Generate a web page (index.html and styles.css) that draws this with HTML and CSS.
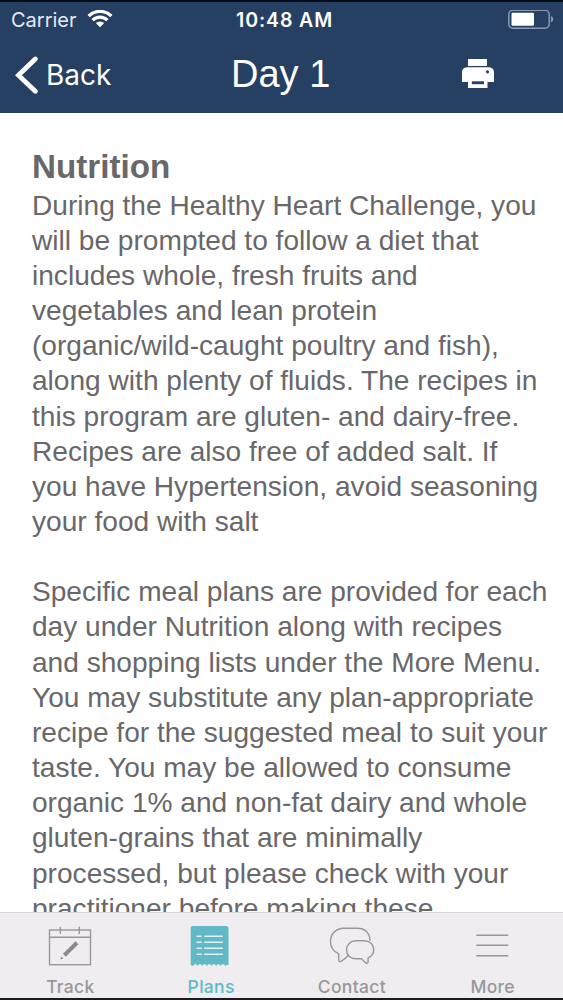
FILE: index.html
```html
<!DOCTYPE html>
<html lang="en">
<head>
    <meta charset="UTF-8">
    <meta name="viewport" content="width=device-width, initial-scale=1.0">
    <title>Day 1</title>
    <link rel="stylesheet" href="styles.css">
</head>
<body>
    <div class="app">
        <header class="header">
            <div class="status-bar">
                <div class="carrier">
                    <span>Carrier</span>
                    <svg class="wifi" width="26" height="19" viewBox="0 0 26 19" fill="none" stroke="#fff" stroke-width="3.2">
                        <path d="M1.6 6 A16.2 16.2 0 0 1 24.4 6"/>
                        <path d="M5.6 10.2 A10.4 10.4 0 0 1 20.4 10.2"/>
                        <path d="M13 17.3 L8.8 13.1 A6 6 0 0 1 17.2 13.1 Z" fill="#fff" stroke="none"/>
                    </svg>
                </div>
                <div class="time">10:48 AM</div>
                <svg class="battery" width="46" height="20" viewBox="0 0 46 20">
                    <rect x="0.8" y="0.3" width="40.4" height="18" rx="4.2" fill="none" stroke="#8799b3" stroke-width="1.5"/>
                    <rect x="3.5" y="2.8" width="22.5" height="13" rx="1.2" fill="#fff"/>
                    <path d="M43 6 Q45.3 6.7 45.3 9.3 Q45.3 11.9 43 12.6 Z" fill="#8799b3"/>
                </svg>
            </div>
            <nav class="nav-bar">
                <a class="back">
                    <svg width="24" height="38" viewBox="0 0 24 38" fill="none" stroke="#fff" stroke-width="4.8" stroke-linecap="round">
                        <path d="M20.3 3 L3.4 19.2 L20.3 35.3"/>
                    </svg>
                    <span>Back</span>
                </a>
                <h1 class="title">Day 1</h1>
                <a class="print">
                    <svg width="32" height="30" viewBox="0 0 32 30">
                        <path d="M6 0 H25 V7 H6 Z" fill="#fff"/>
                        <path d="M5 8.3 H27 Q32 8.5 32 13.5 V23 H25.5 V29 H6 V23 H0 V13.5 Q0 8.5 5 8.3 Z" fill="#fff"/>
                        <circle cx="25.5" cy="12.8" r="1.6" fill="#264063"/>
                        <path d="M9.8 22.3 H22 V25.2 H9.8 Z" fill="#264063"/>
                    </svg>
                </a>
            </nav>
        </header>

        <main class="content">
            <h2>Nutrition</h2>
            <p>During the Healthy Heart Challenge, you<br>
            will be prompted to follow a diet that<br>
            includes whole, fresh fruits and<br>
            vegetables and lean protein<br>
            (organic/wild-caught poultry and fish),<br>
            along with plenty of fluids. The recipes in<br>
            this program are gluten- and dairy-free.<br>
            Recipes are also free of added salt. If<br>
            you have Hypertension, avoid seasoning<br>
            your food with salt</p>
            <p>Specific meal plans are provided for each<br>
            day under Nutrition along with recipes<br>
            and shopping lists under the More Menu.<br>
            You may substitute any plan-appropriate<br>
            recipe for the suggested meal to suit your<br>
            taste. You may be allowed to consume<br>
            organic 1% and non-fat dairy and whole<br>
            gluten-grains that are minimally<br>
            processed, but please check with your<br>
            practitioner before making these</p>
        </main>

        <footer class="tab-bar">
            <a class="tab">
                <svg width="44" height="44" viewBox="0 0 44 44" fill="none" stroke="#99979a" stroke-width="1.4">
                    <rect x="1.5" y="6" width="41" height="34.7"/>
                    <path d="M1.5 13.3 H42.5 M12.3 2.7 V10 M31.3 2.7 V10"/>
                    <path d="M16.3 31.2 L29 18.8" stroke="#8c8a8d" stroke-width="4"/>
                    <path d="M12.3 35.5 L13.3 32.4 L15.5 34.6 Z" fill="#8c8a8d" stroke="none"/>
                </svg>
                <span>Track</span>
            </a>
            <a class="tab active">
                <svg width="44" height="44" viewBox="1.5 0 44 44">
                    <path d="M3.2 41 V4.6 Q3.2 2 5.8 2 H38.4 Q41 2 41 4.6 V41 H39 L37.8 42 L36.6 40.3 H34.4 L33.2 42 L32 40.3 H29.8 L28.6 42 L27.4 40.3 H25.2 L24 42 L22.8 40.3 H20.6 L19.4 42 L18.2 40.3 H16 L14.8 42 L13.6 40.3 H11.4 L10.2 42 L9 40.3 H6.8 L5.6 42 Z" fill="#61b9c8"/>
                    <path d="M9 12.3 H14.3 M9 18.3 H14.3 M9 24.3 H14.3 M9 30.3 H14.3 M16.7 12.3 H35.3 M16.7 18.3 H35.3 M16.7 24.3 H35.3 M16.7 30.3 H35.3" stroke="#e1f1f4" stroke-width="1.6"/>
                </svg>
                <span>Plans</span>
            </a>
            <a class="tab">
                <svg width="46" height="44" viewBox="0.5 0 46 44" fill="none" stroke="#99979a" stroke-width="1.4" stroke-linejoin="round">
                    <path d="M41.5 16.8 C41.5 8.5 36 4.3 29 4.3 H15.5 C7.5 4.3 2 10 2 17.5 C2 23.5 5 27.5 10.2 29.8 V36 Q10.4 38.4 12.5 37.3 Q16.5 35 20.2 31.3"/>
                    <path d="M27.5 16.8 H35.5 C41.5 16.8 45.2 20.5 45.2 25.6 C45.2 30 43.2 32.5 39.6 33.8 V38 Q39 40 37.2 38.8 Q34.6 36.5 33 34.8 H27.5 C21.8 34.8 18 31 18 25.8 C18 20.7 21.8 16.8 27.5 16.8 Z"/>
                </svg>
                <span>Contact</span>
            </a>
            <a class="tab">
                <svg width="44" height="44" viewBox="0.7 0 44 44" stroke="#99979a" stroke-width="1.5">
                    <path d="M6 11.3 H38 M6 21.3 H38 M6 31.7 H38"/>
                </svg>
                <span>More</span>
            </a>
        </footer>
    </div>
</body>
</html>
```
FILE: styles.css
```css
* {
    margin: 0;
    padding: 0;
    box-sizing: border-box;
}

body {
    background-color: #fff;
    font-family: "Liberation Sans", Arial, sans-serif;
}

svg {
    display: block;
    flex: none;
}

.app {
    display: flex;
    flex-direction: column;
    height: 1000px;
    overflow: hidden;
}

.header {
    flex: none;
    height: 113px;
    border-top: 2px solid #070d18;
    background-color: #264063;
    color: #fff;
}

.status-bar {
    display: grid;
    grid-template-columns: 225px 1fr 60px;
    align-items: center;
    height: 35px;
    padding: 0 9px 0 11px;
    font-family: Inter, sans-serif;
    font-size: 20px;
}

.carrier {
    display: flex;
    align-items: center;
    gap: 10px;
    color: #e4eaf3;
}

.time {
    font-weight: 600;
    font-size: 19.5px;
    letter-spacing: 0.9px;
}

.battery {
    justify-self: end;
}

.nav-bar {
    display: grid;
    grid-template-columns: 231px 1fr 101px;
    align-items: center;
    height: 75px;
}

.back {
    display: flex;
    align-items: center;
    gap: 7px;
    padding-left: 15px;
    font-family: Inter, sans-serif;
    font-size: 28px;
}

.title {
    font-size: 38px;
    font-weight: normal;
}

.print {
    padding-bottom: 2px;
}

.content {
    flex: 1;
    min-height: 0;
    overflow: hidden;
    padding: 34px 0 0 32px;
    color: #69676a;
}

.content h2 {
    font-size: 33.2px;
    line-height: 40px;
}

.content p {
    margin-bottom: 35.15px;
    font-size: 28.1px;
    line-height: 35.15px;
    white-space: nowrap;
}

.content h2 + p {
    padding-top: 0.6px;
}

.tab-bar {
    display: flex;
    flex: none;
    height: 88px;
    border-top: 1px solid #d4d2d5;
    border-bottom: 2px solid #1b1a1c;
    background-color: #efedf0;
}

.tab {
    display: flex;
    flex: 1;
    flex-direction: column;
    align-items: center;
    padding-top: 11px;
    color: #99979a;
    font-family: Inter, sans-serif;
    font-size: 17.5px;
    font-weight: 500;
    letter-spacing: 0.3px;
    line-height: 22px;
}

.tab span {
    margin-top: 8px;
}

.active {
    color: #61b9c8;
}
```
